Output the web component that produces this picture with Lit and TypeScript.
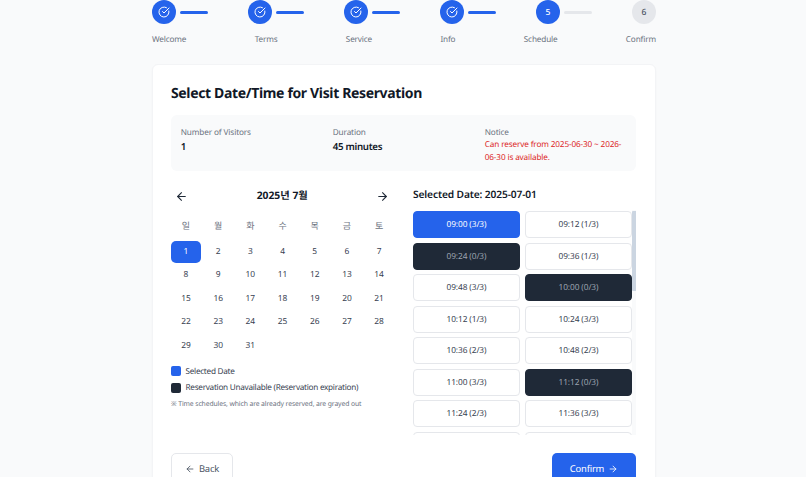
import { LitElement, html, css, svg } from "lit";
import { customElement } from "lit/decorators.js";

const steps = ["Welcome", "Terms", "Service", "Info", "Schedule", "Confirm"];
const slots: [string, string][] = [
  ["09:00 (3/3)", "sel"], ["09:12 (1/3)", ""], ["09:24 (0/3)", "off"], ["09:36 (1/3)", ""],
  ["09:48 (3/3)", ""], ["10:00 (0/3)", "off"], ["10:12 (1/3)", ""], ["10:24 (3/3)", ""],
  ["10:36 (2/3)", ""], ["10:48 (2/3)", ""], ["11:00 (3/3)", ""], ["11:12 (0/3)", "off"],
  ["11:24 (2/3)", ""], ["11:36 (3/3)", ""], ["", ""], ["", ""],
];
const check = svg`<path d="M21.8 10A10 10 0 1 1 17 3.34"/><path d="m9 11 3 3L22 4"/>`;
const left = svg`<path d="m12 19-7-7 7-7"/><path d="M19 12H5"/>`;
const right = svg`<path d="M5 12h14"/><path d="m12 5 7 7-7 7"/>`;
const ico = (p: unknown, c: string) =>
  html`<svg class=${c} viewBox="0 0 24 24" fill="none" stroke="currentColor" stroke-width="2" stroke-linecap="round" stroke-linejoin="round">${p}</svg>`;

@customElement("app-root")
export class AppRoot extends LitElement {
  static styles = css`
    :host { display: block; height: 477px; overflow: hidden; background: #f9fafb; color: #111827;
      font-family: "Noto Sans", "Noto Sans CJK KR", sans-serif; text-rendering: geometricPrecision; }
    * { box-sizing: border-box; }
    .wrap { width: 504px; margin-left: 152px; }
    .circles { display: flex; justify-content: space-between; height: 24px; }
    .step { display: flex; align-items: center; gap: 4px; }
    .circle { width: 24px; height: 24px; border-radius: 50%; background: #2563eb; color: #fff;
      display: flex; align-items: center; justify-content: center; font-size: 8.5px; font-weight: 500; }
    .circle.todo { background: #e5e7eb; color: #4b5563; }
    .chk { width: 12px; height: 12px; }
    .line { width: 28px; height: 3px; border-radius: 2px; background: #2563eb; }
    .line.todo { background: #e5e7eb; }
    .labels { display: flex; justify-content: space-between; margin-top: 9px; font-size: 8.2px; letter-spacing: -0.15px;
      line-height: 13px; color: #6b7280; height: 31px; }
    .card { background: #fff; border: 1px solid #f3f4f6; border-radius: 6px; height: 500px;
      padding: 18px 19px 18px 18px; box-shadow: 0 1px 2px rgba(0,0,0,.03); }
    h1 { margin: 0; font-size: 14px; letter-spacing: -0.35px; line-height: 22px; font-weight: 700; color: #111827; }
    .info { margin-top: 10px; height: 56px; background: #f9fafb; border-radius: 6px; padding: 11px 9.75px;
      display: grid; grid-template-columns: repeat(3, 1fr); gap: 0 10.5px; }
    .info .k { font-size: 8.2px; letter-spacing: -0.12px; line-height: 13px; color: #6b7280; }
    .info .v { font-size: 9.7px; letter-spacing: -0.3px; line-height: 15px; font-weight: 600; color: #111827; margin-top: 0; }
    .info .n { font-size: 8.2px; letter-spacing: -0.14px; line-height: 12.5px; color: #dc2626; margin-top: 0; }
    .cols { display: grid; grid-template-columns: 224px 223px; gap: 18px; margin-top: 13px; height: 267.5px; }
    .nav { display: flex; align-items: center; justify-content: space-between; height: 20px; margin-top: 2px; padding: 0 5.5px 0 4px; }
    .nav svg { width: 13px; height: 13px; color: #1f2937; }
    .month { font-size: 10.3px; font-weight: 700; color: #111827; line-height: 21px; }
    .days, .dates { display: grid; grid-template-columns: repeat(7, 30px); column-gap: 2.2px; }
    .days { margin-top: 10px; height: 22px; }
    .days span { font-size: 9px; line-height: 20px; color: #6b7280; text-align: center; }
    .dates { grid-auto-rows: 22px; row-gap: 1.45px; margin-top: 3px; }
    .dates span { font-size: 8.4px; line-height: 22px; color: #374151; text-align: center; border-radius: 5px; }
    .dates .cur { background: #2563eb; color: #fff; }
    .legend { margin-top: 9px; display: flex; flex-direction: column; gap: 5.5px; }
    .li { display: flex; align-items: center; gap: 4.5px; font-size: 8.2px; letter-spacing: -0.28px; line-height: 11px; color: #374151; }
    .sw { width: 10px; height: 10px; border-radius: 2px; background: #2563eb; }
    .sw.dk { background: #1f2937; }
    .note { margin-top: 5px; font-size: 6.8px; letter-spacing: -0.1px; line-height: 11px; color: #6b7280; }
    h2 { margin: 0; font-size: 10.2px; letter-spacing: -0.12px; line-height: 20px; font-weight: 600; color: #111827; }
    .scroll { margin-top: 6px; height: 225px; overflow: hidden; display: flex; }
    .slots { width: 219px; display: grid; grid-template-columns: 107px 107px; gap: 4.5px 5px; grid-auto-rows: 27px; padding-top: 1px; align-content: start; }
    .slot { border: 1px solid #e5e7eb; border-radius: 4px; background: #fff; color: #374151; font-size: 8.3px; letter-spacing: -0.1px;
      display: flex; align-items: center; justify-content: center; }
    .slot.sel { background: #2563eb; border-color: #2563eb; color: #fff; }
    .slot.off { background: #1f2937; border-color: #1f2937; color: #9ca3af; }
    .bar { width: 5px; margin-left: -0.5px; background: #f9fafb; height: 225px; flex: none; padding-top: 1px; }
    .thumb { height: 80px; background: #cbd5e1; border-radius: 1px; }
    .actions { display: flex; justify-content: space-between; margin-top: 1px; }
    .btn { height: 32px; border-radius: 5px; font-size: 9.4px; letter-spacing: -0.2px; display: flex; align-items: center; justify-content: center; gap: 4px; }
    .btn svg { width: 10px; height: 10px; }
    .back { width: 62px; border: 1px solid #e5e7eb; background: #fff; color: #4b5563; }
    .ok { width: 84px; background: #2563eb; color: #fff; }
  `;

  render() {
    const dates = Array.from({ length: 31 }, (_, i) => i + 1);
    return html`
      <div class="wrap">
        <div class="circles">
          ${steps.map((_, i) => html`<div class="step">
            <div class="circle ${i > 4 ? "todo" : ""}">${i < 4 ? ico(check, "chk") : i + 1}</div>
            ${i < 5 ? html`<div class="line ${i === 4 ? "todo" : ""}"></div>` : ""}
          </div>`)}
        </div>
        <div class="labels">${steps.map((s) => html`<span>${s}</span>`)}</div>
        <div class="card">
          <h1>Select Date/Time for Visit Reservation</h1>
          <div class="info">
            <div><div class="k">Number of Visitors</div><div class="v">1</div></div>
            <div><div class="k">Duration</div><div class="v">45 minutes</div></div>
            <div><div class="k">Notice</div><div class="n">Can reserve from 2025-06-30 ~ 2026-06-30 is available.</div></div>
          </div>
          <div class="cols">
            <div>
              <div class="nav">${ico(left, "")}<span class="month">2025년 7월</span>${ico(right, "")}</div>
              <div class="days">${["일", "월", "화", "수", "목", "금", "토"].map((d) => html`<span>${d}</span>`)}</div>
              <div class="dates">
                ${dates.map((d) => html`<span class=${d === 1 ? "cur" : ""}>${d}</span>`)}
              </div>
              <div class="legend">
                <div class="li"><i class="sw"></i>Selected Date</div>
                <div class="li"><i class="sw dk"></i>Reservation Unavailable (Reservation expiration)</div>
              </div>
              <div class="note">※ Time schedules, which are already reserved, are grayed out</div>
            </div>
            <div>
              <h2>Selected Date: 2025-07-01</h2>
              <div class="scroll">
                <div class="slots">${slots.map(([t, c]) => html`<div class="slot ${c}">${t}</div>`)}</div>
                <div class="bar"><div class="thumb"></div></div>
              </div>
            </div>
          </div>
          <div class="actions">
            <div class="btn back">${ico(left, "")}<span>Back</span></div>
            <div class="btn ok"><span>Confirm</span>${ico(right, "")}</div>
          </div>
        </div>
      </div>
    `;
  }
}
